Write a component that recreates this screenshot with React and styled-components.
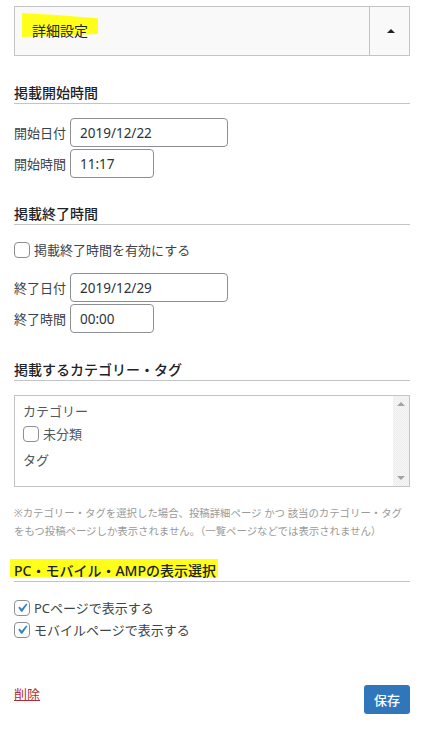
import React from "react";
import styled, { createGlobalStyle } from "styled-components";

const GlobalStyle = createGlobalStyle`
  html, body {
    margin: 0;
    padding: 0;
    background: #fff;
  }
  body {
    font-family: "Noto Sans", "Noto Sans CJK JP", sans-serif;
    font-size: 13px;
    color: #3c434a;
  }
`;

const Page = styled.div`
  padding: 6px 15px 0 14px;
`;

const Header = styled.div`
  display: flex;
  height: 48px;
  border: 1px solid #c3c4c7;
  background: #f9f9f9;
`;

const HeaderTitle = styled.div`
  flex: 1;
  display: flex;
  align-items: center;
  padding-left: 17px;
  font-size: 14px;
  line-height: 20px;
  color: #1d2327;
`;

const Marker = styled.span`
  position: relative;
  z-index: 0;

  &::before {
    content: "";
    position: absolute;
    z-index: -1;
    left: ${(p) => p.$l}px;
    right: ${(p) => p.$r}px;
    top: ${(p) => p.$t}px;
    bottom: ${(p) => p.$b}px;
    background: #ffff1a;
    clip-path: ${(p) => p.$clip || "none"};
  }
`;

const ToggleCell = styled.div`
  width: 39px;
  border-left: 1px solid #c3c4c7;
  display: flex;
  align-items: center;
  justify-content: center;
`;

const Caret = styled.span`
  width: 0;
  height: 0;
  border-left: 4px solid transparent;
  border-right: 4px solid transparent;
  border-bottom: 4px solid #1d2327;
  margin-left: 2px;
`;

const SectionTitle = styled.h3`
  margin: ${(p) => p.$top}px 0 0;
  font-size: 14px;
  line-height: 20px;
  font-weight: 500;
  color: #1d2327;
  border-bottom: 1px solid #c3c4c7;
`;

const Fields = styled.div`
  display: flex;
  flex-direction: column;
  gap: 2px;
  margin-top: ${(p) => p.$top}px;
`;

const FieldRow = styled.div`
  display: flex;
  align-items: center;
`;

const FieldLabel = styled.span`
  width: 56px;
  line-height: 20px;
`;

const TextInput = styled.input`
  box-sizing: border-box;
  width: ${(p) => p.$w}px;
  height: 29px;
  padding: 0 9px;
  border: 1px solid #8c8f94;
  border-radius: 4px;
  font-family: "Noto Sans", "Noto Sans CJK JP", sans-serif;
  font-size: 13.5px;
  color: #2c3338;
  background: #fff;
  outline: none;
`;

const CheckRow = styled.label`
  display: flex;
  align-items: center;
  gap: 4px;
  line-height: ${(p) => p.$lh || 20}px;
  margin-top: ${(p) => p.$top || 0}px;
  color: ${(p) => p.$color || "#3c434a"};
`;

const Box = styled.span`
  box-sizing: border-box;
  width: 16px;
  height: 16px;
  border: 1px solid #8c8f94;
  border-radius: 4px;
  background: #fff;
  display: flex;
  align-items: center;
  justify-content: center;
  flex-shrink: 0;
`;

const CheckIcon = () => (
  <svg width="16" height="16" viewBox="2 2 16 16">
    <path
      d="M14.83 4.89l1.34.94-5.81 8.38H9.02L5.78 9.67l1.34-1.25 2.57 2.4z"
      fill="#3582c4"
    />
  </svg>
);

const Checkbox = ({ checked, children, ...rest }) => (
  <CheckRow {...rest}>
    <Box>{checked && <CheckIcon />}</Box>
    <span>{children}</span>
  </CheckRow>
);

const ListBox = styled.div`
  display: flex;
  height: 92px;
  margin-top: 14px;
  border: 1px solid #c3c4c7;
  box-sizing: border-box;
`;

const ListContent = styled.div`
  flex: 1;
  padding: 5px 8px 0;
  color: #50575e;
`;

const ListLabel = styled.div`
  line-height: 20px;
  margin-top: ${(p) => p.$top || 0}px;
`;

const Scrollbar = styled.div`
  width: 16px;
  display: flex;
  flex-direction: column;
  justify-content: space-between;
  background: repeating-conic-gradient(#ededed 0 25%, #f6f6f6 0 50%) 0 0 / 2px 2px;
`;

const ScrollArrow = styled.div`
  height: 16px;
  display: flex;
  align-items: center;
  justify-content: center;

  &::after {
    content: "";
    width: 0;
    height: 0;
    border-left: 4px solid transparent;
    border-right: 4px solid transparent;
    ${(p) => (p.$down ? "border-top" : "border-bottom")}: 4px solid #a3a3a3;
  }
`;

const Note = styled.p`
  margin: 17px 0 0;
  font-size: 10.4px;
  line-height: 18px;
  color: #9a9a9a;
`;

const Footer = styled.div`
  display: flex;
  justify-content: space-between;
  align-items: flex-start;
  margin-top: 44px;
`;

const DeleteLink = styled.a`
  color: #b32d2e;
  text-decoration: underline;
  line-height: 18px;
  cursor: pointer;
`;

const SaveButton = styled.button`
  height: 29px;
  padding: 0 10px;
  border: none;
  border-radius: 3px;
  background: #2f77ba;
  color: #fff;
  font-family: "Noto Sans", "Noto Sans CJK JP", sans-serif;
  font-size: 13px;
  font-weight: 500;
  cursor: pointer;
`;

export default function App() {
  return (
    <Page>
      <GlobalStyle />
      <Header>
        <HeaderTitle>
          <Marker $l={-10} $r={-10} $t={-8} $b={4} $clip="polygon(0 0, 45% 8%, 100% 22%, 100% 88%, 0 100%)">
            詳細設定
          </Marker>
        </HeaderTitle>
        <ToggleCell>
          <Caret />
        </ToggleCell>
      </Header>

      <SectionTitle $top={27}>掲載開始時間</SectionTitle>
      <Fields $top={14}>
        <FieldRow>
          <FieldLabel>開始日付</FieldLabel>
          <TextInput $w={158} defaultValue="2019/12/22" />
        </FieldRow>
        <FieldRow>
          <FieldLabel>開始時間</FieldLabel>
          <TextInput $w={84} defaultValue="11:17" />
        </FieldRow>
      </Fields>

      <SectionTitle $top={26}>掲載終了時間</SectionTitle>
      <Checkbox $top={15}>掲載終了時間を有効にする</Checkbox>
      <Fields $top={13}>
        <FieldRow>
          <FieldLabel>終了日付</FieldLabel>
          <TextInput $w={158} defaultValue="2019/12/29" />
        </FieldRow>
        <FieldRow>
          <FieldLabel>終了時間</FieldLabel>
          <TextInput $w={84} defaultValue="00:00" />
        </FieldRow>
      </Fields>

      <SectionTitle $top={27}>掲載するカテゴリー・タグ</SectionTitle>
      <ListBox>
        <ListContent>
          <ListLabel>カテゴリー</ListLabel>
          <Checkbox $top={3} $color="#50575e">未分類</Checkbox>
          <ListLabel $top={6}>タグ</ListLabel>
        </ListContent>
        <Scrollbar>
          <ScrollArrow />
          <ScrollArrow $down />
        </Scrollbar>
      </ListBox>
      <Note>
        ※カテゴリー・タグを選択した場合、投稿詳細ページ かつ 該当のカテゴリー・タグをもつ投稿ページしか表示されません。（一覧ページなどでは表示されません）
      </Note>

      <SectionTitle $top={21}>
        <Marker $l={-4} $r={-2} $t={-2} $b={3}>
          PC・モバイル・AMPの表示選択
        </Marker>
      </SectionTitle>
      <Checkbox checked $top={15} $lh={22}>PCページで表示する</Checkbox>
      <Checkbox checked $lh={22}>モバイルページで表示する</Checkbox>

      <Footer>
        <DeleteLink>削除</DeleteLink>
        <SaveButton>保存</SaveButton>
      </Footer>
    </Page>
  );
}
